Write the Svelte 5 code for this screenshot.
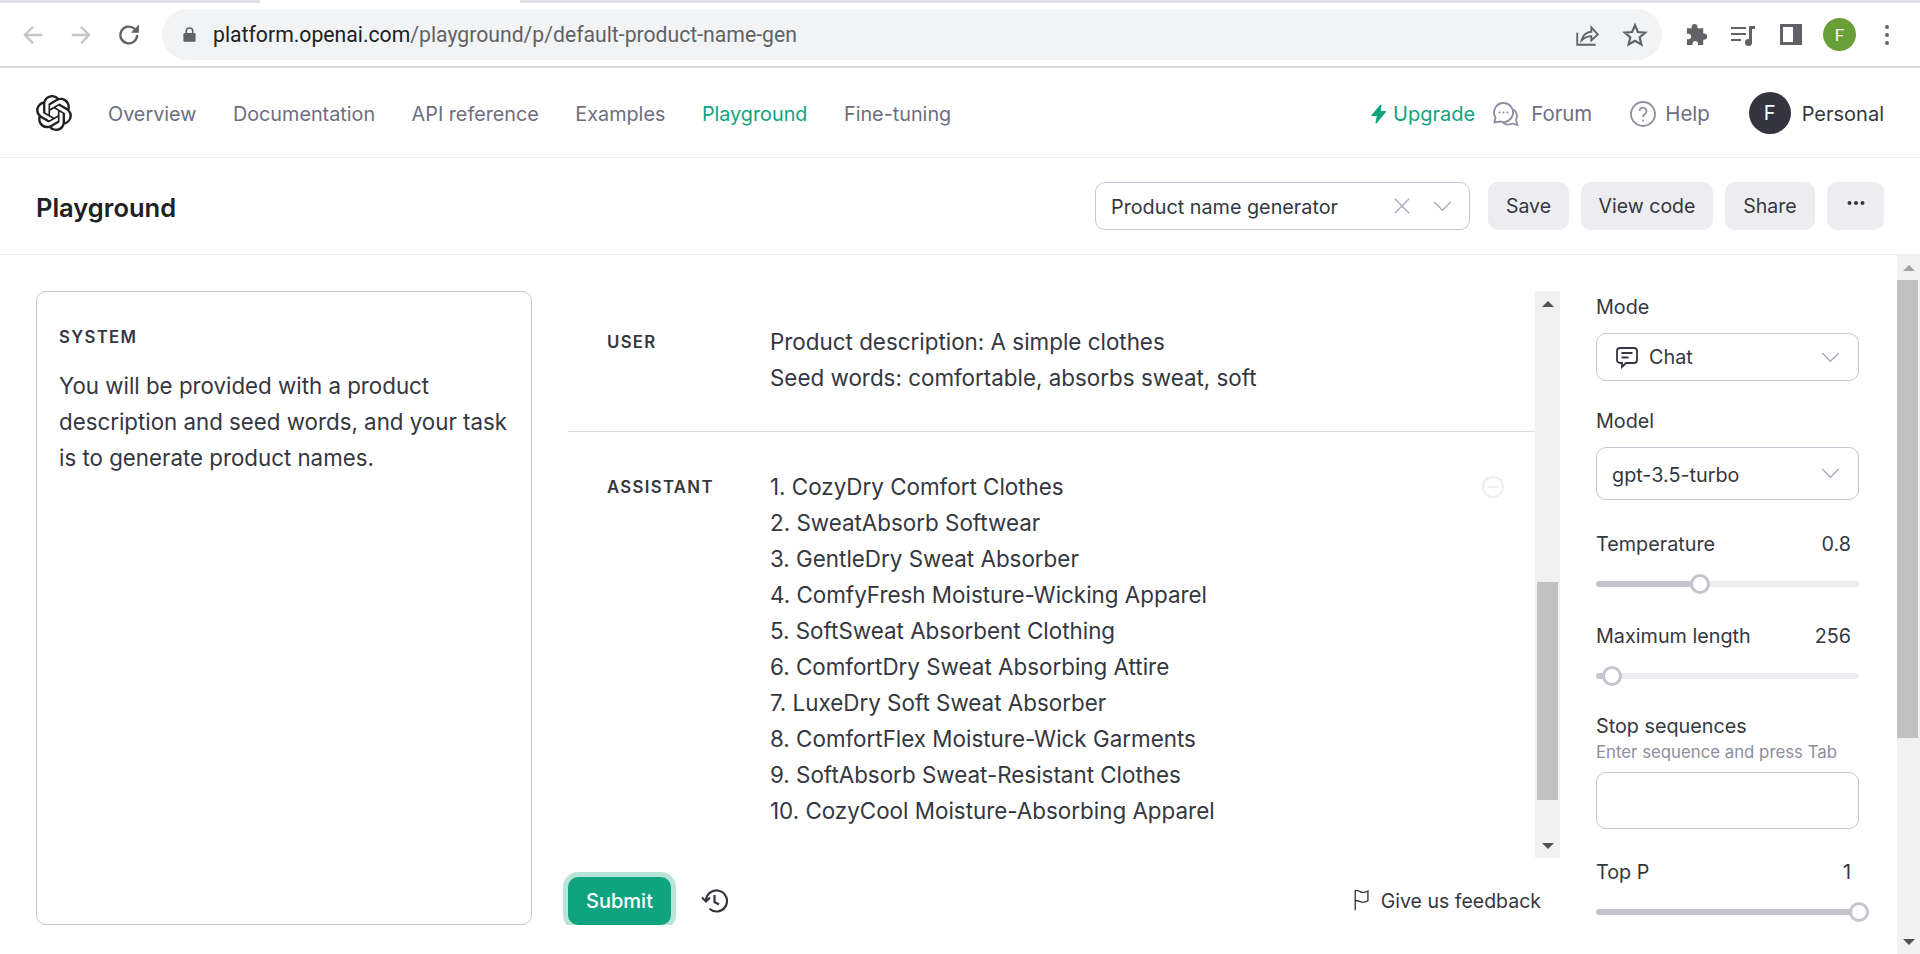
<script>
  const navLinks = [
    { label: 'Overview' },
    { label: 'Documentation' },
    { label: 'API reference' },
    { label: 'Examples' },
    { label: 'Playground', active: true },
    { label: 'Fine-tuning' }
  ];

  const names = [
    '1. CozyDry Comfort Clothes',
    '2. SweatAbsorb Softwear',
    '3. GentleDry Sweat Absorber',
    '4. ComfyFresh Moisture-Wicking Apparel',
    '5. SoftSweat Absorbent Clothing',
    '6. ComfortDry Sweat Absorbing Attire',
    '7. LuxeDry Soft Sweat Absorber',
    '8. ComfortFlex Moisture-Wick Garments',
    '9. SoftAbsorb Sweat-Resistant Clothes',
    '10. CozyCool Moisture-Absorbing Apparel'
  ];

  const logo = 'M22.2819 9.8211a5.9847 5.9847 0 0 0-.5157-4.9108 6.0462 6.0462 0 0 0-6.5098-2.9A6.0651 6.0651 0 0 0 4.9807 4.1818a5.9847 5.9847 0 0 0-3.9977 2.9 6.0462 6.0462 0 0 0 .7427 7.0966 5.98 5.98 0 0 0 .511 4.9107 6.051 6.051 0 0 0 6.5146 2.9001A5.9847 5.9847 0 0 0 13.2599 24a6.0557 6.0557 0 0 0 5.7718-4.2058 5.9894 5.9894 0 0 0 3.9977-2.9001 6.0557 6.0557 0 0 0-.7475-7.0729zm-9.022 12.6081a4.4755 4.4755 0 0 1-2.8764-1.0408l.1419-.0804 4.7783-2.7582a.7948.7948 0 0 0 .3927-.6813v-6.7369l2.02 1.1686a.071.071 0 0 1 .038.052v5.5826a4.504 4.504 0 0 1-4.4945 4.4944zm-9.6607-4.1254a4.4708 4.4708 0 0 1-.5346-3.0137l.142.0852 4.783 2.7582a.7712.7712 0 0 0 .7806 0l5.8428-3.3685v2.3324a.0804.0804 0 0 1-.0332.0615L9.74 19.9502a4.4992 4.4992 0 0 1-6.1408-1.6464zM2.3408 7.8956a4.485 4.485 0 0 1 2.3655-1.9728V11.6a.7664.7664 0 0 0 .3879.6765l5.8144 3.3543-2.0201 1.1685a.0757.0757 0 0 1-.071 0l-4.8303-2.7865A4.504 4.504 0 0 1 2.3408 7.872zm16.5963 3.8558L13.1038 8.364 15.1192 7.2a.0757.0757 0 0 1 .071 0l4.8303 2.7913a4.4944 4.4944 0 0 1-.6765 8.1042v-5.6772a.79.79 0 0 0-.407-.667zm2.0107-3.0231l-.142-.0852-4.7735-2.7818a.7759.7759 0 0 0-.7854 0L9.409 9.2297V6.8974a.0662.0662 0 0 1 .0284-.0615l4.8303-2.7866a4.4992 4.4992 0 0 1 6.6802 4.66zM8.3065 12.863l-2.02-1.1638a.0804.0804 0 0 1-.038-.0567V6.0742a4.4992 4.4992 0 0 1 7.3757-3.4537l-.142.0805L8.704 5.459a.7948.7948 0 0 0-.3927.6813zm1.0976-2.3654l2.602-1.4998 2.6069 1.4998v2.9994l-2.5974 1.4997-2.6067-1.4997Z';
</script>

<div class="page">
  <div class="tabstrip"><div class="tab"></div></div>
  <div class="toolbar">
    <svg class="tb back" viewBox="0 0 24 24"><path d="M20 12H5M12 5l-7 7 7 7" /></svg>
    <svg class="tb fwd" viewBox="0 0 24 24"><path d="M4 12h15M12 5l7 7-7 7" /></svg>
    <svg class="tb reload" viewBox="0 0 24 24"><path d="M19 12a7.2 7.2 0 1 1-2.2-5.2" /><path class="solid" d="M20.5 3v7h-7z" /></svg>
    <div class="omnibox">
      <svg class="lock" viewBox="0 0 16 20"><path d="M3 8V6a5 5 0 0 1 10 0v2h1a1.5 1.5 0 0 1 1.500 1.500v8A1.500 1.500 0 0 1 14 19H2a1.500 1.500 0 0 1-1.500-1.500v-8A1.500 1.500 0 0 1 2 8zm2 0h6V6a3 3 0 0 0-6 0z" /></svg>
      <span class="url"><b>platform.openai.com</b>/playground/p/default-product-name-gen</span>
      <svg class="omni-icon share" viewBox="0 0 24 24"><path d="M3 10v11h17M7 17c1-5 5-8 9-8V5l6 6.500-6 5.500v-4c-4 0-6 1-9 4z" /></svg>
      <svg class="omni-icon star" viewBox="0 0 24 24"><path d="M12 3l2.700 6.200 6.700.6-5.100 4.400 1.600 6.600L12 17.300l-5.900 3.500 1.600-6.600L2.600 9.800l6.700-.6z" /></svg>
    </div>
    <svg class="ext" viewBox="0 0 24 24"><path d="M10 1a3 3 0 0 1 3 3v1.500h6V11h1a3.200 3.200 0 0 1 0 6.400h-1V23h-5.500v-1.500a2.800 2.800 0 0 0-5.600 0V23H2v-6h1.500a2.900 2.900 0 0 0 0-5.800H2V5.500h5V4a3 3 0 0 1 3-3z" /></svg>
    <svg class="queue" viewBox="0 0 26 24"><path d="M1 4h15v2H1zM1 10h15v2H1zM1 16h10v2H1zM19 3h6v3h-3v13.500a3.500 3.500 0 1 1-3-3.400z" /></svg>
    <div class="sidepanel"><div></div></div>
    <div class="profile">F</div>
    <svg class="kebab" viewBox="0 0 6 24"><circle cx="3" cy="4" r="2" /><circle cx="3" cy="12" r="2" /><circle cx="3" cy="20" r="2" /></svg>
  </div>

  <header class="nav">
    <svg class="logo" viewBox="0 0 24 24"><path d={logo} /></svg>
    <nav class="links">
      {#each navLinks as link}
        <span class:active={link.active}>{link.label}</span>
      {/each}
    </nav>
    <div class="nav-right">
      <span class="upgrade">
        <svg viewBox="0 0 15 20"><path d="M10 1L1 11.500h5.500L5 19l9.500-11.500H9z" /></svg>
        Upgrade
      </span>
      <span class="nav-item forum">
        <svg viewBox="0 0 28 28"><path d="M11.500 3a9.500 9.500 0 0 0-8 14.500L2.500 22.500l6-1A9.500 9.500 0 1 0 11.500 3z" /><path d="M21.500 9.500a8 8 0 0 1 2.500 10.500l1.500 5-5.500-1.500a9 9 0 0 1-9-.5" /><circle class="dot" cx="7.500" cy="12.500" r="1" /><circle class="dot" cx="11.500" cy="12.500" r="1" /><circle class="dot" cx="15.500" cy="12.500" r="1" /></svg>
        Forum
      </span>
      <span class="nav-item help">
        <svg viewBox="0 0 28 28"><circle cx="14" cy="14" r="12" /><path d="M10.500 11a3.500 3.500 0 1 1 5.500 3c-1.300.9-2 1.500-2 3" /><circle class="dot" cx="14" cy="20.500" r="1" /></svg>
        Help
      </span>
      <span class="avatar">F</span>
      <span class="personal">Personal</span>
    </div>
  </header>

  <div class="subhead">
    <h1>Playground</h1>
    <div class="preset">
      <span>Product name generator</span>
      <svg class="clear" viewBox="0 0 20 20"><path d="M2 2l16 16M18 2L2 18" /></svg>
      <svg class="chev" viewBox="0 0 20 12"><path d="M1 1l9 9 9-9" /></svg>
    </div>
    <button class="btn save">Save</button>
    <button class="btn code">View code</button>
    <button class="btn share-btn">Share</button>
    <button class="btn more"><svg viewBox="0 0 18 4"><circle cx="2.500" cy="2" r="2" /><circle cx="9" cy="2" r="2" /><circle cx="15.500" cy="2" r="2" /></svg></button>
  </div>

  <main class="main">
    <div class="content">
      <section class="system">
        <div class="role sys-role">SYSTEM</div>
        <p>You will be provided with a product description and seed words, and your task is to generate product names.</p>
      </section>

      <section class="middle">
        <div class="chat">
          <div class="messages">
            <div class="message user">
              <div class="role">USER</div>
              <div class="text">Product description: A simple clothes<br />Seed words: comfortable, absorbs sweat, soft</div>
            </div>
            <div class="message assistant">
              <div class="role">ASSISTANT</div>
              <div class="text">
                {#each names as name}<div>{name}</div>{/each}
              </div>
              <svg class="minus" viewBox="0 0 24 24"><circle cx="12" cy="12" r="10" /><path d="M7 12h10" /></svg>
            </div>
          </div>
          <div class="vscroll inner">
            <div class="arrow up"></div>
            <div class="track"><div class="thumb"></div></div>
            <div class="arrow down"></div>
          </div>
        </div>
        <div class="footer">
          <button class="submit">Submit</button>
          <svg class="history" viewBox="0 0 28 28"><path d="M6 14a10.500 10.500 0 1 1 3.500 7.800" /><path d="M2 10.500L6 14.500l4-4M14.500 8v7l4.500 2.500" /></svg>
          <span class="feedback">
            <svg viewBox="0 0 20 26"><path d="M2 25V2c5-1 6 2 9 2 2 0 4-.5 6-1.500V14c-2 1-4 1.500-6 1.500-3 0-4-2-9-1.500" /></svg>
            Give us feedback
          </span>
        </div>
      </section>

      <aside class="settings">
        <div class="label mode-label">Mode</div>
        <div class="select mode">
          <svg class="chat-icon" viewBox="0 0 24 24"><path d="M5 3h14a3 3 0 0 1 3 3v9a3 3 0 0 1-3 3h-8l-4 4v-4H5a3 3 0 0 1-3-3V6a3 3 0 0 1 3-3zM6.500 8h11M6.500 12.500h7" /></svg>
          <span>Chat</span>
          <svg class="chev" viewBox="0 0 20 12"><path d="M1 1l9 9 9-9" /></svg>
        </div>
        <div class="label model-label">Model</div>
        <div class="select model">
          <span>gpt-3.5-turbo</span>
          <svg class="chev" viewBox="0 0 20 12"><path d="M1 1l9 9 9-9" /></svg>
        </div>
        <div class="label row temp-label"><span>Temperature</span><span>0.8</span></div>
        <div class="slider"><div class="fill" style="width: 104px"></div><div class="knob"></div></div>
        <div class="label row max-label"><span>Maximum length</span><span>256</span></div>
        <div class="slider"><div class="fill" style="width: 16px"></div><div class="knob"></div></div>
        <div class="label stop-label">Stop sequences</div>
        <div class="hint">Enter sequence and press Tab</div>
        <div class="stop-input"></div>
        <div class="label row top-label"><span>Top P</span><span>1</span></div>
        <div class="slider"><div class="fill" style="width: 263px"></div><div class="knob"></div></div>
      </aside>
    </div>

    <div class="vscroll outer">
      <div class="arrow up"></div>
      <div class="track"><div class="thumb"></div></div>
      <div class="arrow down"></div>
    </div>
  </main>
</div>

<style>
  :global(body) {
    margin: 0;
    overflow: hidden;
    background: #fff;
  }
  .page {
    width: 1920px;
    height: 954px;
    overflow: hidden;
    font-family: Inter, "Liberation Sans", sans-serif;
    color: #353740;
  }

  /* browser chrome */
  .tabstrip {
    height: 3px;
    background: #dee1e6;
    padding-left: 260px;
  }
  .tab {
    width: 260px;
    height: 3px;
    background: #fff;
  }
  .toolbar {
    height: 63px;
    box-sizing: border-box;
    padding: 6px 0 6px 0;
    display: flex;
    align-items: center;
  }
  .tb {
    width: 28px;
    height: 28px;
    fill: none;
    stroke-width: 2;
  }
  .tb path { stroke: #c4c6c9; }
  .back { margin-left: 19px; }
  .fwd { margin-left: 20px; }
  .reload { margin-left: 20px; }
  .reload path { stroke: #5f6368; }
  .reload path.solid { fill: #5f6368; stroke: none; }
  .omnibox {
    margin-left: 19px;
    width: 1500px;
    height: 51px;
    border-radius: 26px;
    background: #f1f3f4;
    display: flex;
    align-items: center;
  }
  .lock {
    width: 13px;
    height: 17px;
    margin-left: 21px;
    fill: #5f6368;
  }
  .url {
    margin-left: 17px;
    font-family: Roboto, sans-serif;
    font-size: 21.2px;
    color: #5f6368;
    white-space: nowrap;
  }
  .url b {
    font-weight: 400;
    color: #202124;
  }
  .omni-icon {
    width: 26px;
    height: 26px;
    fill: none;
    stroke: #5f6368;
    stroke-width: 1.700;
  }
  .share { margin-left: auto; }
  .star { margin-left: 22px; margin-right: 14px; stroke-width: 2; }
  .ext {
    width: 23px;
    height: 23px;
    margin-left: 23px;
    fill: #5f6368;
    flex: none;
  }
  .queue {
    width: 26px;
    height: 24px;
    margin-left: 22px;
    fill: #5f6368;
    flex: none;
  }
  .sidepanel {
    margin-left: 24px;
    width: 22px;
    height: 21px;
    box-sizing: border-box;
    background: #5f6368;
    padding: 3px 9px 3px 3px;
    flex: none;
  }
  .sidepanel div {
    background: #fff;
    height: 100%;
  }
  .profile {
    margin-left: 21px;
    width: 33px;
    height: 33px;
    border-radius: 50%;
    background: #689f38;
    color: #fff;
    font-family: Roboto, sans-serif;
    font-size: 17px;
    display: flex;
    align-items: center;
    justify-content: center;
    flex: none;
  }
  .kebab {
    width: 6px;
    height: 24px;
    margin-left: 28px;
    fill: #5f6368;
    flex: none;
  }

  /* top nav */
  .nav {
    border-top: 2px solid #dedede;
    height: 89px;
    border-bottom: 1px solid #ececf1;
    display: flex;
    align-items: center;
    padding: 0 36px 0 36px;
  }
  .logo {
    width: 36px;
    height: 36px;
    fill: #202123;
    flex: none;
  }
  .links {
    margin-left: 36px;
    display: flex;
    gap: 36.5px;
    font-size: 19.8px;
    color: #6e6e80;
    padding-top: 2px;
  }
  .links .active { color: #10a37f; }
  .nav-right {
    margin-left: auto;
    display: flex;
    align-items: center;
    font-size: 20px;
    padding-top: 2px;
  }
  .upgrade {
    display: flex;
    align-items: center;
    gap: 7px;
    color: #10a37f;
    padding-top: 1px;
  }
  .upgrade svg {
    width: 15px;
    height: 20px;
    fill: #10a37f;
    stroke: #10a37f;
    stroke-width: 1.200;
    stroke-linejoin: round;
  }
  .nav-item {
    display: flex;
    align-items: center;
    font-size: 20.4px;
    color: #6e6e80;
  }
  .nav-item svg {
    width: 28px;
    height: 28px;
    fill: none;
    stroke: #8e8ea0;
    stroke-width: 1.800;
  }
  .nav-item .dot { fill: #8e8ea0; stroke: none; }
  .forum { margin-left: 17px; gap: 11px; }
  .help { margin-left: 37px; gap: 8px; }
  .avatar {
    margin-left: 39px;
    margin-top: -2px;
    width: 42px;
    height: 42px;
    border-radius: 50%;
    background: #343541;
    color: #fff;
    display: flex;
    align-items: center;
    justify-content: center;
    font-size: 20px;
  }
  .personal {
    margin-left: 11px;
    color: #353740;
  }

  /* title row */
  .subhead {
    height: 96px;
    border-bottom: 1px solid #ececf1;
    box-sizing: content-box;
    display: flex;
    align-items: center;
    padding: 0 36px;
  }
  h1 {
    margin: 0 auto 0 0;
    padding-top: 3px;
    font-size: 25.5px;
    font-weight: 600;
    color: #202123;
  }
  .preset {
    width: 375px;
    height: 48px;
    box-sizing: border-box;
    border: 1px solid #c5c5d2;
    border-radius: 10px;
    display: flex;
    align-items: center;
    padding: 0 17px 0 15px;
    font-size: 19.800px;
  }
  .preset span { flex: 1; padding-top: 2px; }
  .clear {
    width: 18px;
    height: 18px;
    fill: none;
    stroke: #acacbe;
    stroke-width: 1.600;
    margin-right: 22px;
  }
  .chev {
    width: 19px;
    height: 11px;
    fill: none;
    stroke: #acacbe;
    stroke-width: 1.600;
    flex: none;
  }
  .btn {
    height: 48px;
    margin-left: 12px;
    padding: 0;
    border: 0;
    border-radius: 10px;
    background: #ececf1;
    color: #353740;
    font: 400 19.500px Inter, sans-serif;
  }
  .save { width: 81px; margin-left: 18px; }
  .code { width: 132px; }
  .share-btn { width: 90px; }
  .more { width: 57px; padding-bottom: 6px; }
  .more svg { width: 18px; height: 4px; fill: #353740; display: block; margin: 0 auto; }

  /* main area */
  .main {
    height: 699px;
    display: flex;
  }
  .content {
    flex: 1;
    display: flex;
    align-items: flex-start;
    padding: 36px 0 0 36px;
    overflow: hidden;
  }
  .system {
    width: 496px;
    height: 634px;
    box-sizing: border-box;
    border: 1px solid #c5c5d2;
    border-radius: 10px;
    padding: 35px 22px;
  }
  .role {
    font-size: 16.800px;
    font-weight: 600;
    letter-spacing: 1.300px;
    color: #353740;
  }
  .system p {
    margin: 21px 0 0;
    font-size: 22.300px;
    line-height: 36px;
  }
  .middle {
    margin-left: 36px;
    width: 992px;
    flex: none;
  }
  .chat {
    height: 567px;
    display: flex;
  }
  .messages {
    flex: 1;
  }
  .message {
    display: flex;
    position: relative;
    padding: 33px 0 0 39px;
  }
  .message .role {
    width: 163px;
    flex: none;
    line-height: 36px;
  }
  .message .text {
    font-size: 22.400px;
    line-height: 36px;
  }
  .user {
    height: 141px;
    box-sizing: border-box;
    padding-top: 33px;
    border-bottom: 1px solid #d9d9e3;
  }
  .assistant { padding-top: 37px; }
  .minus {
    position: absolute;
    right: 30px;
    top: 43px;
    width: 24px;
    height: 24px;
    fill: none;
    stroke: #ececf1;
    stroke-width: 1.800;
  }
  .footer {
    height: 53px;
    margin-top: 14px;
    margin-left: -6px;
    padding-left: 6px;
    display: flex;
    align-items: center;
    overflow: hidden;
  }
  .submit {
    width: 103px;
    height: 48px;
    border: 0;
    border-radius: 10px;
    background: #10a37f;
    color: #fff;
    font: 500 20px Inter, sans-serif;
    box-shadow: 0 0 0 5px #b9e5d9;
    margin-top: 5px;
    flex: none;
  }
  .history {
    margin-left: 29px;
    margin-top: 4px;
    width: 28px;
    height: 28px;
    fill: none;
    stroke: #353740;
    stroke-width: 2.200;
  }
  .feedback {
    margin-left: auto;
    margin-right: 19px;
    padding-top: 5px;
    display: flex;
    align-items: center;
    gap: 10px;
    font-size: 19.500px;
  }
  .feedback svg {
    width: 18px;
    height: 22px;
    margin-top: -3px;
    fill: none;
    stroke: #353740;
    stroke-width: 1.600;
  }

  /* settings column */
  .settings {
    margin-left: 36px;
    width: 263px;
    flex: none;
    font-size: 19.800px;
  }
  .label {
    line-height: 24px;
    color: #353740;
  }
  .row {
    display: flex;
    justify-content: space-between;
    padding-right: 8px;
  }
  .mode-label { margin-top: 4px; }
  .select {
    box-sizing: border-box;
    border: 1px solid #c5c5d2;
    border-radius: 10px;
    display: flex;
    align-items: center;
    padding: 0 18px 0 15px;
  }
  .select span { flex: 1; }
  .mode { height: 48px; margin-top: 14px; padding-left: 18px; }
  .model { height: 53px; margin-top: 14px; }
  .model span { padding-top: 3px; }
  .chat-icon {
    width: 24px;
    height: 24px;
    fill: none;
    stroke: #353740;
    stroke-width: 1.800;
    margin-right: 10px;
  }
  .model-label { margin-top: 28px; }
  .temp-label { margin-top: 32px; }
  .slider {
    margin-top: 25px;
    height: 6px;
    border-radius: 3px;
    background: #ececf1;
    display: flex;
    align-items: center;
  }
  .fill {
    height: 6px;
    border-radius: 3px;
    background: #c5c5d2;
    flex: none;
  }
  .knob {
    width: 20px;
    height: 20px;
    margin-left: -10px;
    box-sizing: border-box;
    border: 3px solid #c5c5d2;
    border-radius: 50%;
    background: #fff;
    flex: none;
  }
  .max-label { margin-top: 37px; }
  .stop-label { margin-top: 35px; }
  .hint {
    margin-top: 4px;
    font-size: 16.800px;
    line-height: 20px;
    color: #8e8ea0;
  }
  .stop-input {
    margin-top: 10px;
    height: 57px;
    box-sizing: border-box;
    border: 1px solid #c5c5d2;
    border-radius: 10px;
  }
  .top-label { margin-top: 31px; }

  /* windows-style scrollbars */
  .vscroll {
    background: #f1f1f1;
    display: flex;
    flex-direction: column;
    flex: none;
  }
  .vscroll .track { flex: 1; position: relative; }
  .inner { width: 25px; height: 567px; }
  .outer { width: 23px; height: 699px; }
  .thumb {
    background: #c1c1c1;
    position: absolute;
  }
  .inner .thumb { left: 2px; width: 21px; top: 266px; height: 218px; }
  .outer .thumb { left: 0; width: 21px; top: 0; height: 458px; }
  .arrow {
    height: 25px;
    flex: none;
    display: flex;
    align-items: center;
    justify-content: center;
  }
  .arrow::before {
    content: "";
    border-left: 6px solid transparent;
    border-right: 6px solid transparent;
  }
  .arrow.up::before { border-bottom: 6px solid #505050; }
  .arrow.down::before { border-top: 6px solid #505050; }
  .outer .arrow.up::before { border-bottom-color: #a3a3a3; }
</style>
